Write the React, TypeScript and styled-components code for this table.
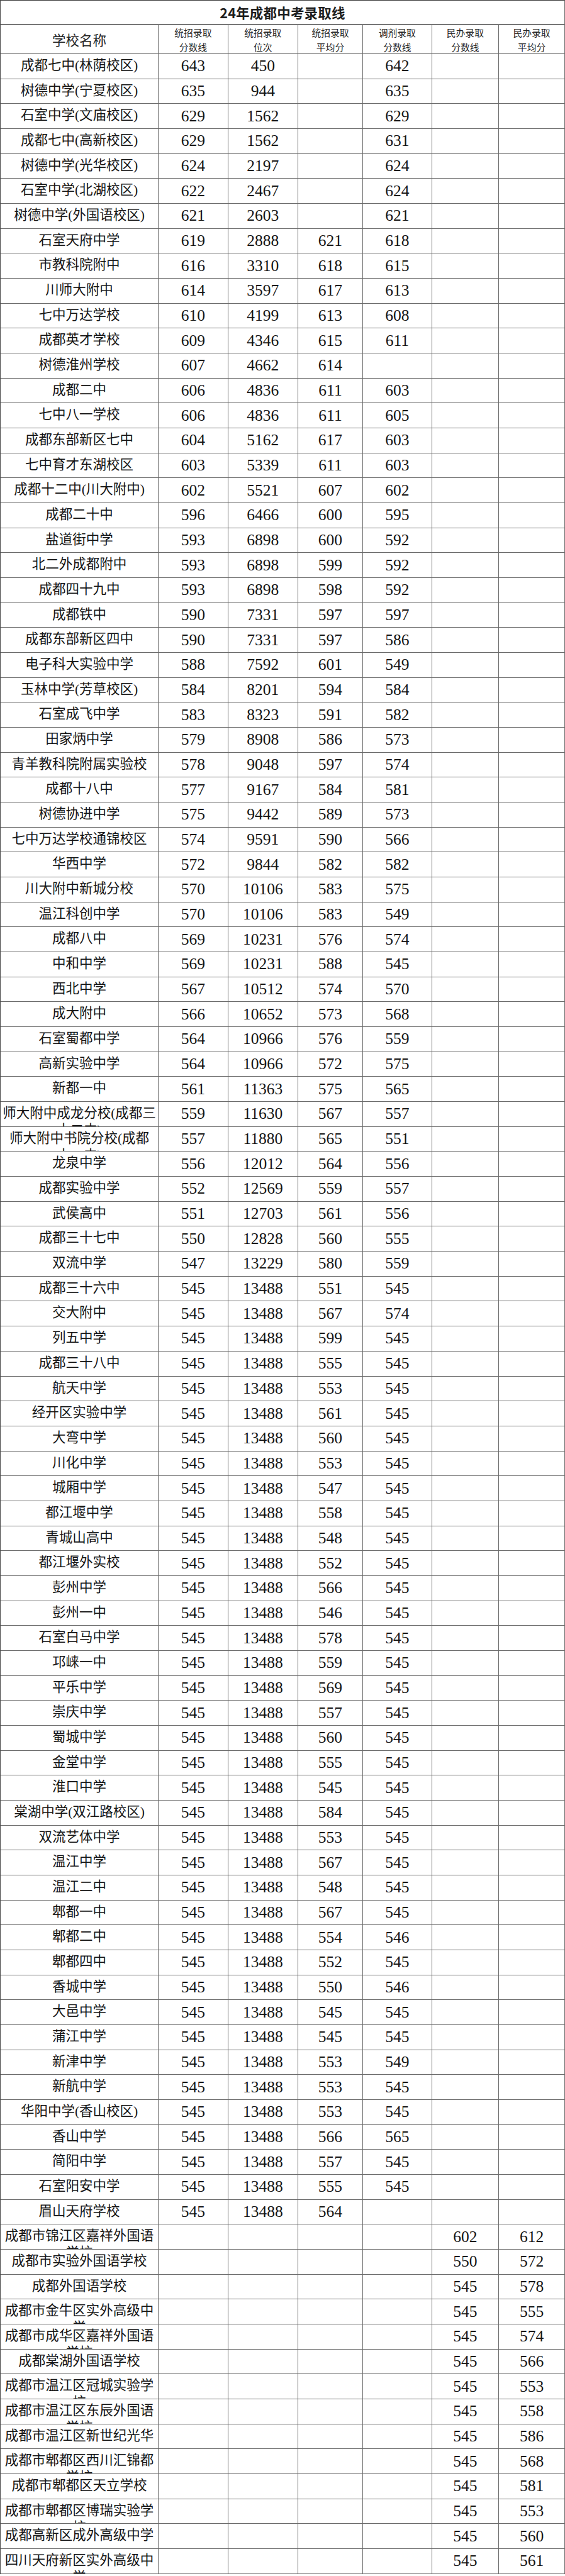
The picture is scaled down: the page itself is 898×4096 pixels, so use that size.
import React from 'react';
import styled, { createGlobalStyle } from 'styled-components';

const GlobalStyle = createGlobalStyle`
  html, body { margin: 0; padding: 0; background: #fff; }
  body { font-family: "Liberation Serif", "Noto Sans CJK SC", serif; color: #111; }
`;

const COLS = '251.1px 110.5px 111.4px 103px 109.7px 106.4px 1fr';
const LINE = '#6a6a6a';

const Sheet = styled.div`
  width: 898px;
  box-sizing: border-box;
  border-top: 1.5px solid #3a3a3a;
  border-left: 1.5px solid #4a4a4a;
  border-right: 1px solid ${LINE};
  background: #fff;
`;

const Title = styled.div`
  height: 38.5px;
  box-sizing: border-box;
  display: flex;
  align-items: center;
  justify-content: center;
  border-bottom: 2px solid #777;
  font-family: "Noto Sans CJK SC", sans-serif;
  font-weight: 700;
  font-size: 21.5px;
  color: #1e1e1e;
  letter-spacing: 0.2px;
`;

const Row = styled.div<{ $h: number }>`
  display: grid;
  grid-template-columns: ${COLS};
  height: ${(p) => p.$h}px;
  box-sizing: border-box;
  border-bottom: 1px solid ${LINE};
`;

const HeadCell = styled.div<{ $big?: boolean }>`
  box-sizing: border-box;
  border-right: 1px solid ${LINE};
  display: flex;
  flex-direction: column;
  align-items: center;
  justify-content: center;
  font-family: "Noto Sans CJK SC", sans-serif;
  font-size: ${(p) => (p.$big ? '21.5px' : '14.8px')};
  line-height: ${(p) => (p.$big ? '28px' : '23px')};
  color: #262626;
  &:last-child { border-right: none; }
`;

const NameCell = styled.div`
  box-sizing: border-box;
  border-right: 1px solid ${LINE};
  overflow: hidden;
  padding-top: 5px;
  text-align: center;
  white-space: nowrap;
  font-family: "Liberation Serif", "Noto Sans CJK SC", serif;
  font-size: 21.5px;
  line-height: 27px;
  color: #151515;
`;

const NumCell = styled.div`
  box-sizing: border-box;
  border-right: 1px solid ${LINE};
  display: flex;
  align-items: center;
  justify-content: center;
  font-family: "Liberation Serif", serif;
  font-size: 25.5px;
  color: #151515;
  &:last-child { border-right: none; }
`;

type R = [string, string, string, string, string, string, string];

const DATA: R[] = [
  ['成都七中(林荫校区)', '643', '450', '', '642', '', ''],
  ['树德中学(宁夏校区)', '635', '944', '', '635', '', ''],
  ['石室中学(文庙校区)', '629', '1562', '', '629', '', ''],
  ['成都七中(高新校区)', '629', '1562', '', '631', '', ''],
  ['树德中学(光华校区)', '624', '2197', '', '624', '', ''],
  ['石室中学(北湖校区)', '622', '2467', '', '624', '', ''],
  ['树德中学(外国语校区)', '621', '2603', '', '621', '', ''],
  ['石室天府中学', '619', '2888', '621', '618', '', ''],
  ['市教科院附中', '616', '3310', '618', '615', '', ''],
  ['川师大附中', '614', '3597', '617', '613', '', ''],
  ['七中万达学校', '610', '4199', '613', '608', '', ''],
  ['成都英才学校', '609', '4346', '615', '611', '', ''],
  ['树德淮州学校', '607', '4662', '614', '', '', ''],
  ['成都二中', '606', '4836', '611', '603', '', ''],
  ['七中八一学校', '606', '4836', '611', '605', '', ''],
  ['成都东部新区七中', '604', '5162', '617', '603', '', ''],
  ['七中育才东湖校区', '603', '5339', '611', '603', '', ''],
  ['成都十二中(川大附中)', '602', '5521', '607', '602', '', ''],
  ['成都二十中', '596', '6466', '600', '595', '', ''],
  ['盐道街中学', '593', '6898', '600', '592', '', ''],
  ['北二外成都附中', '593', '6898', '599', '592', '', ''],
  ['成都四十九中', '593', '6898', '598', '592', '', ''],
  ['成都铁中', '590', '7331', '597', '597', '', ''],
  ['成都东部新区四中', '590', '7331', '597', '586', '', ''],
  ['电子科大实验中学', '588', '7592', '601', '549', '', ''],
  ['玉林中学(芳草校区)', '584', '8201', '594', '584', '', ''],
  ['石室成飞中学', '583', '8323', '591', '582', '', ''],
  ['田家炳中学', '579', '8908', '586', '573', '', ''],
  ['青羊教科院附属实验校', '578', '9048', '597', '574', '', ''],
  ['成都十八中', '577', '9167', '584', '581', '', ''],
  ['树德协进中学', '575', '9442', '589', '573', '', ''],
  ['七中万达学校通锦校区', '574', '9591', '590', '566', '', ''],
  ['华西中学', '572', '9844', '582', '582', '', ''],
  ['川大附中新城分校', '570', '10106', '583', '575', '', ''],
  ['温江科创中学', '570', '10106', '583', '549', '', ''],
  ['成都八中', '569', '10231', '576', '574', '', ''],
  ['中和中学', '569', '10231', '588', '545', '', ''],
  ['西北中学', '567', '10512', '574', '570', '', ''],
  ['成大附中', '566', '10652', '573', '568', '', ''],
  ['石室蜀都中学', '564', '10966', '576', '559', '', ''],
  ['高新实验中学', '564', '10966', '572', '575', '', ''],
  ['新都一中', '561', '11363', '575', '565', '', ''],
  ['师大附中成龙分校(成都三|十二中)', '559', '11630', '567', '557', '', ''],
  ['师大附中书院分校(成都|十一中)', '557', '11880', '565', '551', '', ''],
  ['龙泉中学', '556', '12012', '564', '556', '', ''],
  ['成都实验中学', '552', '12569', '559', '557', '', ''],
  ['武侯高中', '551', '12703', '561', '556', '', ''],
  ['成都三十七中', '550', '12828', '560', '555', '', ''],
  ['双流中学', '547', '13229', '580', '559', '', ''],
  ['成都三十六中', '545', '13488', '551', '545', '', ''],
  ['交大附中', '545', '13488', '567', '574', '', ''],
  ['列五中学', '545', '13488', '599', '545', '', ''],
  ['成都三十八中', '545', '13488', '555', '545', '', ''],
  ['航天中学', '545', '13488', '553', '545', '', ''],
  ['经开区实验中学', '545', '13488', '561', '545', '', ''],
  ['大弯中学', '545', '13488', '560', '545', '', ''],
  ['川化中学', '545', '13488', '553', '545', '', ''],
  ['城厢中学', '545', '13488', '547', '545', '', ''],
  ['都江堰中学', '545', '13488', '558', '545', '', ''],
  ['青城山高中', '545', '13488', '548', '545', '', ''],
  ['都江堰外实校', '545', '13488', '552', '545', '', ''],
  ['彭州中学', '545', '13488', '566', '545', '', ''],
  ['彭州一中', '545', '13488', '546', '545', '', ''],
  ['石室白马中学', '545', '13488', '578', '545', '', ''],
  ['邛崃一中', '545', '13488', '559', '545', '', ''],
  ['平乐中学', '545', '13488', '569', '545', '', ''],
  ['崇庆中学', '545', '13488', '557', '545', '', ''],
  ['蜀城中学', '545', '13488', '560', '545', '', ''],
  ['金堂中学', '545', '13488', '555', '545', '', ''],
  ['淮口中学', '545', '13488', '545', '545', '', ''],
  ['棠湖中学(双江路校区)', '545', '13488', '584', '545', '', ''],
  ['双流艺体中学', '545', '13488', '553', '545', '', ''],
  ['温江中学', '545', '13488', '567', '545', '', ''],
  ['温江二中', '545', '13488', '548', '545', '', ''],
  ['郫都一中', '545', '13488', '567', '545', '', ''],
  ['郫都二中', '545', '13488', '554', '546', '', ''],
  ['郫都四中', '545', '13488', '552', '545', '', ''],
  ['香城中学', '545', '13488', '550', '546', '', ''],
  ['大邑中学', '545', '13488', '545', '545', '', ''],
  ['蒲江中学', '545', '13488', '545', '545', '', ''],
  ['新津中学', '545', '13488', '553', '549', '', ''],
  ['新航中学', '545', '13488', '553', '545', '', ''],
  ['华阳中学(香山校区)', '545', '13488', '553', '545', '', ''],
  ['香山中学', '545', '13488', '566', '565', '', ''],
  ['简阳中学', '545', '13488', '557', '545', '', ''],
  ['石室阳安中学', '545', '13488', '555', '545', '', ''],
  ['眉山天府学校', '545', '13488', '564', '', '', ''],
  ['成都市锦江区嘉祥外国语|学校', '', '', '', '', '602', '612'],
  ['成都市实验外国语学校', '', '', '', '', '550', '572'],
  ['成都外国语学校', '', '', '', '', '545', '578'],
  ['成都市金牛区实外高级中|学', '', '', '', '', '545', '555'],
  ['成都市成华区嘉祥外国语|学校', '', '', '', '', '545', '574'],
  ['成都棠湖外国语学校', '', '', '', '', '545', '566'],
  ['成都市温江区冠城实验学|校', '', '', '', '', '545', '553'],
  ['成都市温江区东辰外国语|学校', '', '', '', '', '545', '558'],
  ['成都市温江区新世纪光华', '', '', '', '', '545', '586'],
  ['成都市郫都区西川汇锦都|学校', '', '', '', '', '545', '568'],
  ['成都市郫都区天立学校', '', '', '', '', '545', '581'],
  ['成都市郫都区博瑞实验学|校', '', '', '', '', '545', '553'],
  ['成都高新区成外高级中学', '', '', '', '', '545', '560'],
  ['四川天府新区实外高级中|学', '', '', '', '', '545', '561'],
];

const HEAD: [string, string][] = [
  ['统招录取', '分数线'],
  ['统招录取', '位次'],
  ['统招录取', '平均分'],
  ['调剂录取', '分数线'],
  ['民办录取', '分数线'],
  ['民办录取', '平均分'],
];

function Name({ text }: { text: string }) {
  const [a, b] = text.split('|');
  return (
    <NameCell>
      {a}
      {b ? (
        <>
          <br />
          {b}
        </>
      ) : null}
    </NameCell>
  );
}

export default function App() {
  return (
    <>
      <GlobalStyle />
      <Sheet>
        <Title>24年成都中考录取线</Title>
        <Row $h={46.4}>
          <HeadCell $big>学校名称</HeadCell>
          {HEAD.map(([l1, l2], i) => (
            <HeadCell key={i}>
              <span>{l1}</span>
              <span>{l2}</span>
            </HeadCell>
          ))}
        </Row>
        {DATA.map((r, i) => (
          <Row $h={39.68} key={i}>
            <Name text={r[0]} />
            {r.slice(1).map((v, j) => (
              <NumCell key={j}>{v}</NumCell>
            ))}
          </Row>
        ))}
      </Sheet>
    </>
  );
}
